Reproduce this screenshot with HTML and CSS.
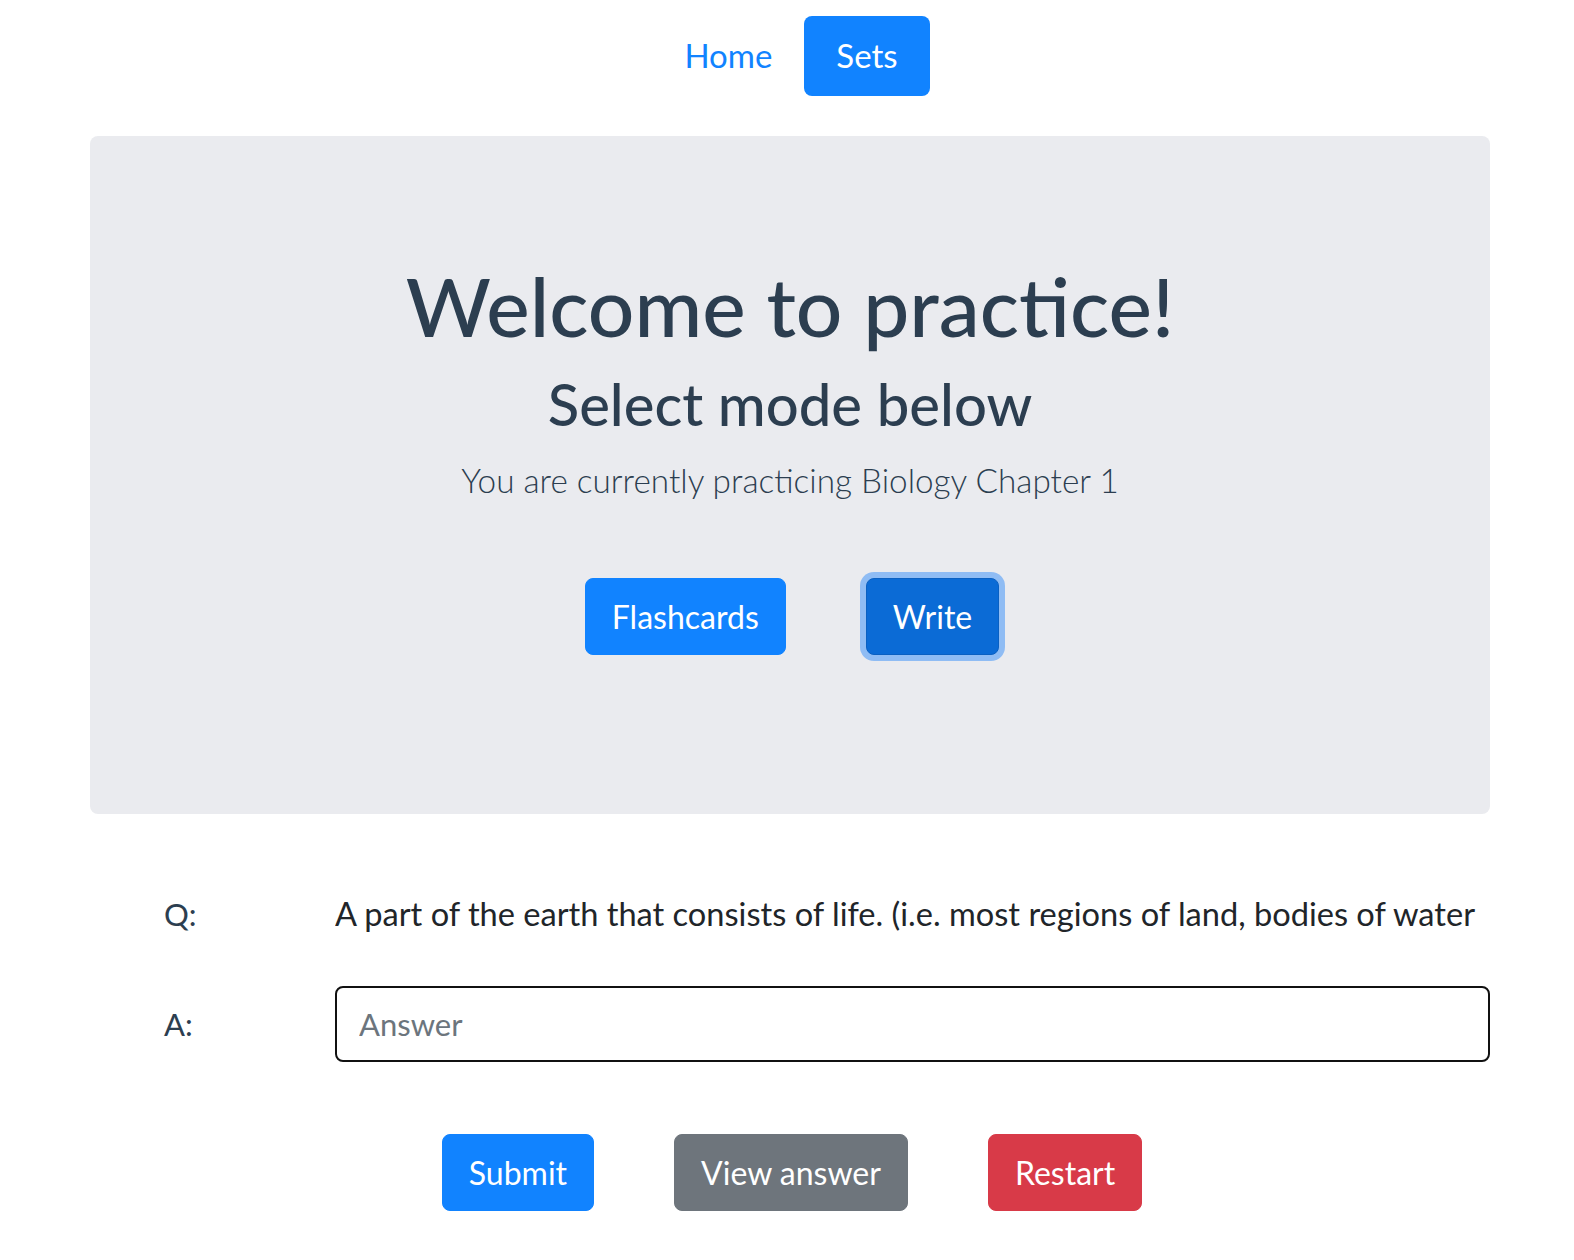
FILE: index.html
```html
<!DOCTYPE html>
<html lang="en">
<head>
<meta charset="utf-8">
<title>Practice</title>
<link rel="stylesheet" href="styles.css">
</head>
<body>
<div class="app">
  <nav class="nav">
    <a class="nav-link" href="#">Home</a>
    <a class="nav-link active" href="#">Sets</a>
  </nav>
  <div class="container">
    <section class="jumbotron">
      <h1 class="title">Welcome to practice!</h1>
      <h2 class="subtitle">Select mode below</h2>
      <p class="lead">You are currently practicing Biology Chapter 1</p>
      <div class="modes">
        <button class="btn btn-primary">Flashcards</button>
        <button class="btn btn-primary btn-focus">Write</button>
      </div>
    </section>
    <div class="qa">
      <div class="qa-row">
        <span class="qa-label">Q:</span>
        <span class="question">A part of the earth that consists of life. (i.e. most regions of land, bodies of water</span>
      </div>
      <div class="qa-row qa-answer">
        <span class="qa-label">A:</span>
        <input class="answer" type="text" placeholder="Answer">
      </div>
    </div>
    <div class="actions">
      <button class="btn btn-primary">Submit</button>
      <button class="btn btn-secondary">View answer</button>
      <button class="btn btn-danger">Restart</button>
    </div>
  </div>
</div>
</body>
</html>
```
FILE: styles.css
```css
html, body {
  margin: 0;
  padding: 0;
  background: #ffffff;
}
body {
  font-family: Lato, "Open Sans", Arial, sans-serif;
  color: #2c3e50;
}
.nav {
  display: flex;
  justify-content: center;
  padding: 16px 0 0 8px;
}
.nav-link {
  display: block;
  font-size: 33px;
  line-height: 50px;
  padding: 14px 32px 16px;
  color: #1183ff;
  text-decoration: none;
  border-radius: 8px;
}
.nav-link.active {
  background: #1183ff;
  color: #ffffff;
}
.container {
  padding: 40px 84px 0 90px;
}
.jumbotron {
  background: #eaebef;
  border-radius: 8px;
  padding: 120px 0 159px;
  text-align: center;
}
.title {
  margin: 0;
  font-size: 82px;
  line-height: 1.2;
  font-weight: 500;
}
.subtitle {
  margin: 15px 0 0;
  font-size: 58px;
  line-height: 1.2;
  font-weight: 500;
}
.lead {
  margin: 17px 0 0;
  font-size: 33.3px;
  line-height: 48px;
  font-weight: 300;
}
.modes {
  display: flex;
  justify-content: center;
  gap: 80px;
  margin-top: 74px;
  padding-left: 4px;
}
.btn {
  font-family: inherit;
  font-size: 32px;
  line-height: 50px;
  padding: 13px 26px 12px;
  border: 1px solid transparent;
  border-radius: 8px;
  color: #ffffff;
  cursor: pointer;
}
.btn-primary {
  background: #1183ff;
  border-color: #1183ff;
}
.btn-focus {
  background: #0b6bd6;
  border-color: #0a60c2;
  box-shadow: 0 0 0 6px #8fbcf4;
}
.btn-secondary {
  background: #6e757c;
  border-color: #6e757c;
}
.btn-danger {
  background: #d83a48;
  border-color: #d83a48;
}
.qa {
  margin-top: 76px;
}
.qa-row {
  display: grid;
  grid-template-columns: 245px 1fr;
  align-items: center;
  font-size: 32.6px;
  line-height: 48px;
}
.qa-label {
  padding-left: 74px;
  font-size: 31px;
}
.question {
  color: #212529;
  white-space: nowrap;
  overflow: hidden;
}
.qa-answer {
  margin-top: 48px;
}
.answer {
  box-sizing: border-box;
  width: 100%;
  height: 76px;
  border: 2px solid #111111;
  border-radius: 8px;
  padding: 0 22px;
  font-family: inherit;
  font-size: 31px;
  color: #212529;
  background: #ffffff;
  outline: none;
}
.answer::placeholder {
  color: #6c757d;
}
.actions {
  display: flex;
  justify-content: center;
  gap: 80px;
  margin-top: 72px;
  padding-left: 4px;
}
```
